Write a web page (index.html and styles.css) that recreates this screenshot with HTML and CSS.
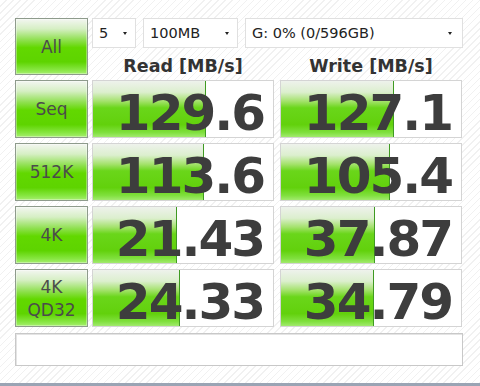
FILE: index.html
```html
<!DOCTYPE html>
<html>
<head>
<meta charset="utf-8">
<link rel="stylesheet" href="styles.css">
</head>
<body>
<div class="app">
  <div class="top">
    <div class="btn btn-all">All</div>
    <div class="topright">
      <div class="selects">
        <div class="sel sel-n"><span>5</span><i class="arr"></i></div>
        <div class="sel sel-size"><span>100MB</span><i class="arr"></i></div>
        <div class="sel sel-drive"><span>G: 0% (0/596GB)</span><i class="arr"></i></div>
      </div>
      <div class="heads">
        <div class="head">Read [MB/s]</div>
        <div class="head">Write [MB/s]</div>
      </div>
    </div>
  </div>
  <div class="row">
    <div class="btn">Seq</div>
    <div class="cell read" style="--w:112px">129.6</div>
    <div class="cell" style="--w:112px">127.1</div>
  </div>
  <div class="row">
    <div class="btn">512K</div>
    <div class="cell read" style="--w:110px">113.6</div>
    <div class="cell" style="--w:108px">105.4</div>
  </div>
  <div class="row">
    <div class="btn">4K</div>
    <div class="cell read" style="--w:83px">21.43</div>
    <div class="cell" style="--w:93px">37.87</div>
  </div>
  <div class="row">
    <div class="btn btn-two">4K<br>QD32</div>
    <div class="cell read" style="--w:86px">24.33</div>
    <div class="cell" style="--w:92px">34.79</div>
  </div>
  <div class="status"></div>
</div>
<div class="edge"></div>
</body>
</html>
```
FILE: styles.css
```css
html, body {
  margin: 0;
  padding: 0;
}
body {
  width: 480px;
  height: 386px;
  overflow: hidden;
  background-color: #fff;
  background-image: repeating-linear-gradient(135deg, #ffffff 0 4px, #f1f1f1 4px 5px);
  font-family: "DejaVu Sans", Verdana, sans-serif;
  color: #333;
  display: flex;
  flex-direction: column;
}
.app {
  padding: 18px 0 0 15px;
  height: 365px;
  box-sizing: border-box;
}
.top {
  display: flex;
  height: 62px;
}
.btn {
  width: 73px;
  height: 58px;
  box-sizing: border-box;
  border: 1px solid #8e9b8c;
  box-shadow: inset 0 0 0 1px rgba(255,255,255,0.35);
  background: linear-gradient(to bottom, #f3f6f1 0%, #d6efc4 18%, #8fe050 38%, #62d800 52%, #5ed400 78%, #86e640 92%, #a6ee70 100%);
  display: flex;
  align-items: center;
  justify-content: center;
  text-align: center;
  font-size: 17px;
  color: #4b4b4b;
  flex: none;
}
.btn-all {
  height: 57px;
}
.btn-two {
  line-height: 23px;
  padding-top: 1px;
}
.topright {
  margin-left: 4px;
  display: flex;
  flex-direction: column;
}
.selects {
  display: flex;
  gap: 7px;
  height: 30px;
}
.sel {
  height: 30px;
  box-sizing: border-box;
  border: 1px solid #e0e0e0;
  background: #fff;
  display: flex;
  align-items: center;
  justify-content: space-between;
  padding: 0 8px 0 6px;
  font-size: 14.5px;
  color: #222;
}
.sel-n { width: 44px; }
.sel-size { width: 95px; }
.sel-drive { width: 218px; padding-right: 10px; }
.arr {
  width: 0;
  height: 0;
  border-left: 2px solid transparent;
  border-right: 2px solid transparent;
  border-top: 3px solid #222;
  margin-top: 1px;
}
.heads {
  display: flex;
  gap: 6px;
  height: 30px;
  align-items: center;
}
.head {
  width: 182px;
  text-align: center;
  font-weight: bold;
  font-size: 17.5px;
  color: #333;
  padding-top: 6px;
}
.row {
  display: flex;
  margin-bottom: 5px;
}
.cell {
  width: 182px;
  height: 58px;
  box-sizing: border-box;
  border: 1px solid #d4d4d4;
  background-color: #fff;
  background-image:
    linear-gradient(#3f9a22, #3f9a22),
    linear-gradient(to bottom, #eef2ec 0%, #dcefce 20%, #a4e26c 36%, #6ad61a 48%, #62d10c 78%, #80e03e 92%, #a2ea6e 100%);
  background-repeat: no-repeat;
  background-position: var(--w) 0, 0 0;
  background-size: 1px 100%, var(--w) 100%;
  margin-left: 6px;
  font-family: "DejaVu Sans", sans-serif;
  font-weight: bold;
  font-size: 50px;
  letter-spacing: -2px;
  line-height: 48px;
  padding: 8px 9px 0 0;
  text-align: right;
  color: #3d3d3d;
}
.cell.read {
  margin-left: 4px;
}
.status {
  margin-top: 6px;
  width: 448px;
  height: 33px;
  box-sizing: border-box;
  border: 1px solid #c8c8c8;
  box-shadow: inset 1px 1px 0 #e4e4e4;
  background: #fff;
}
.edge {
  margin-top: 18px;
  height: 3px;
  background: #9aa4b4;
}
```
